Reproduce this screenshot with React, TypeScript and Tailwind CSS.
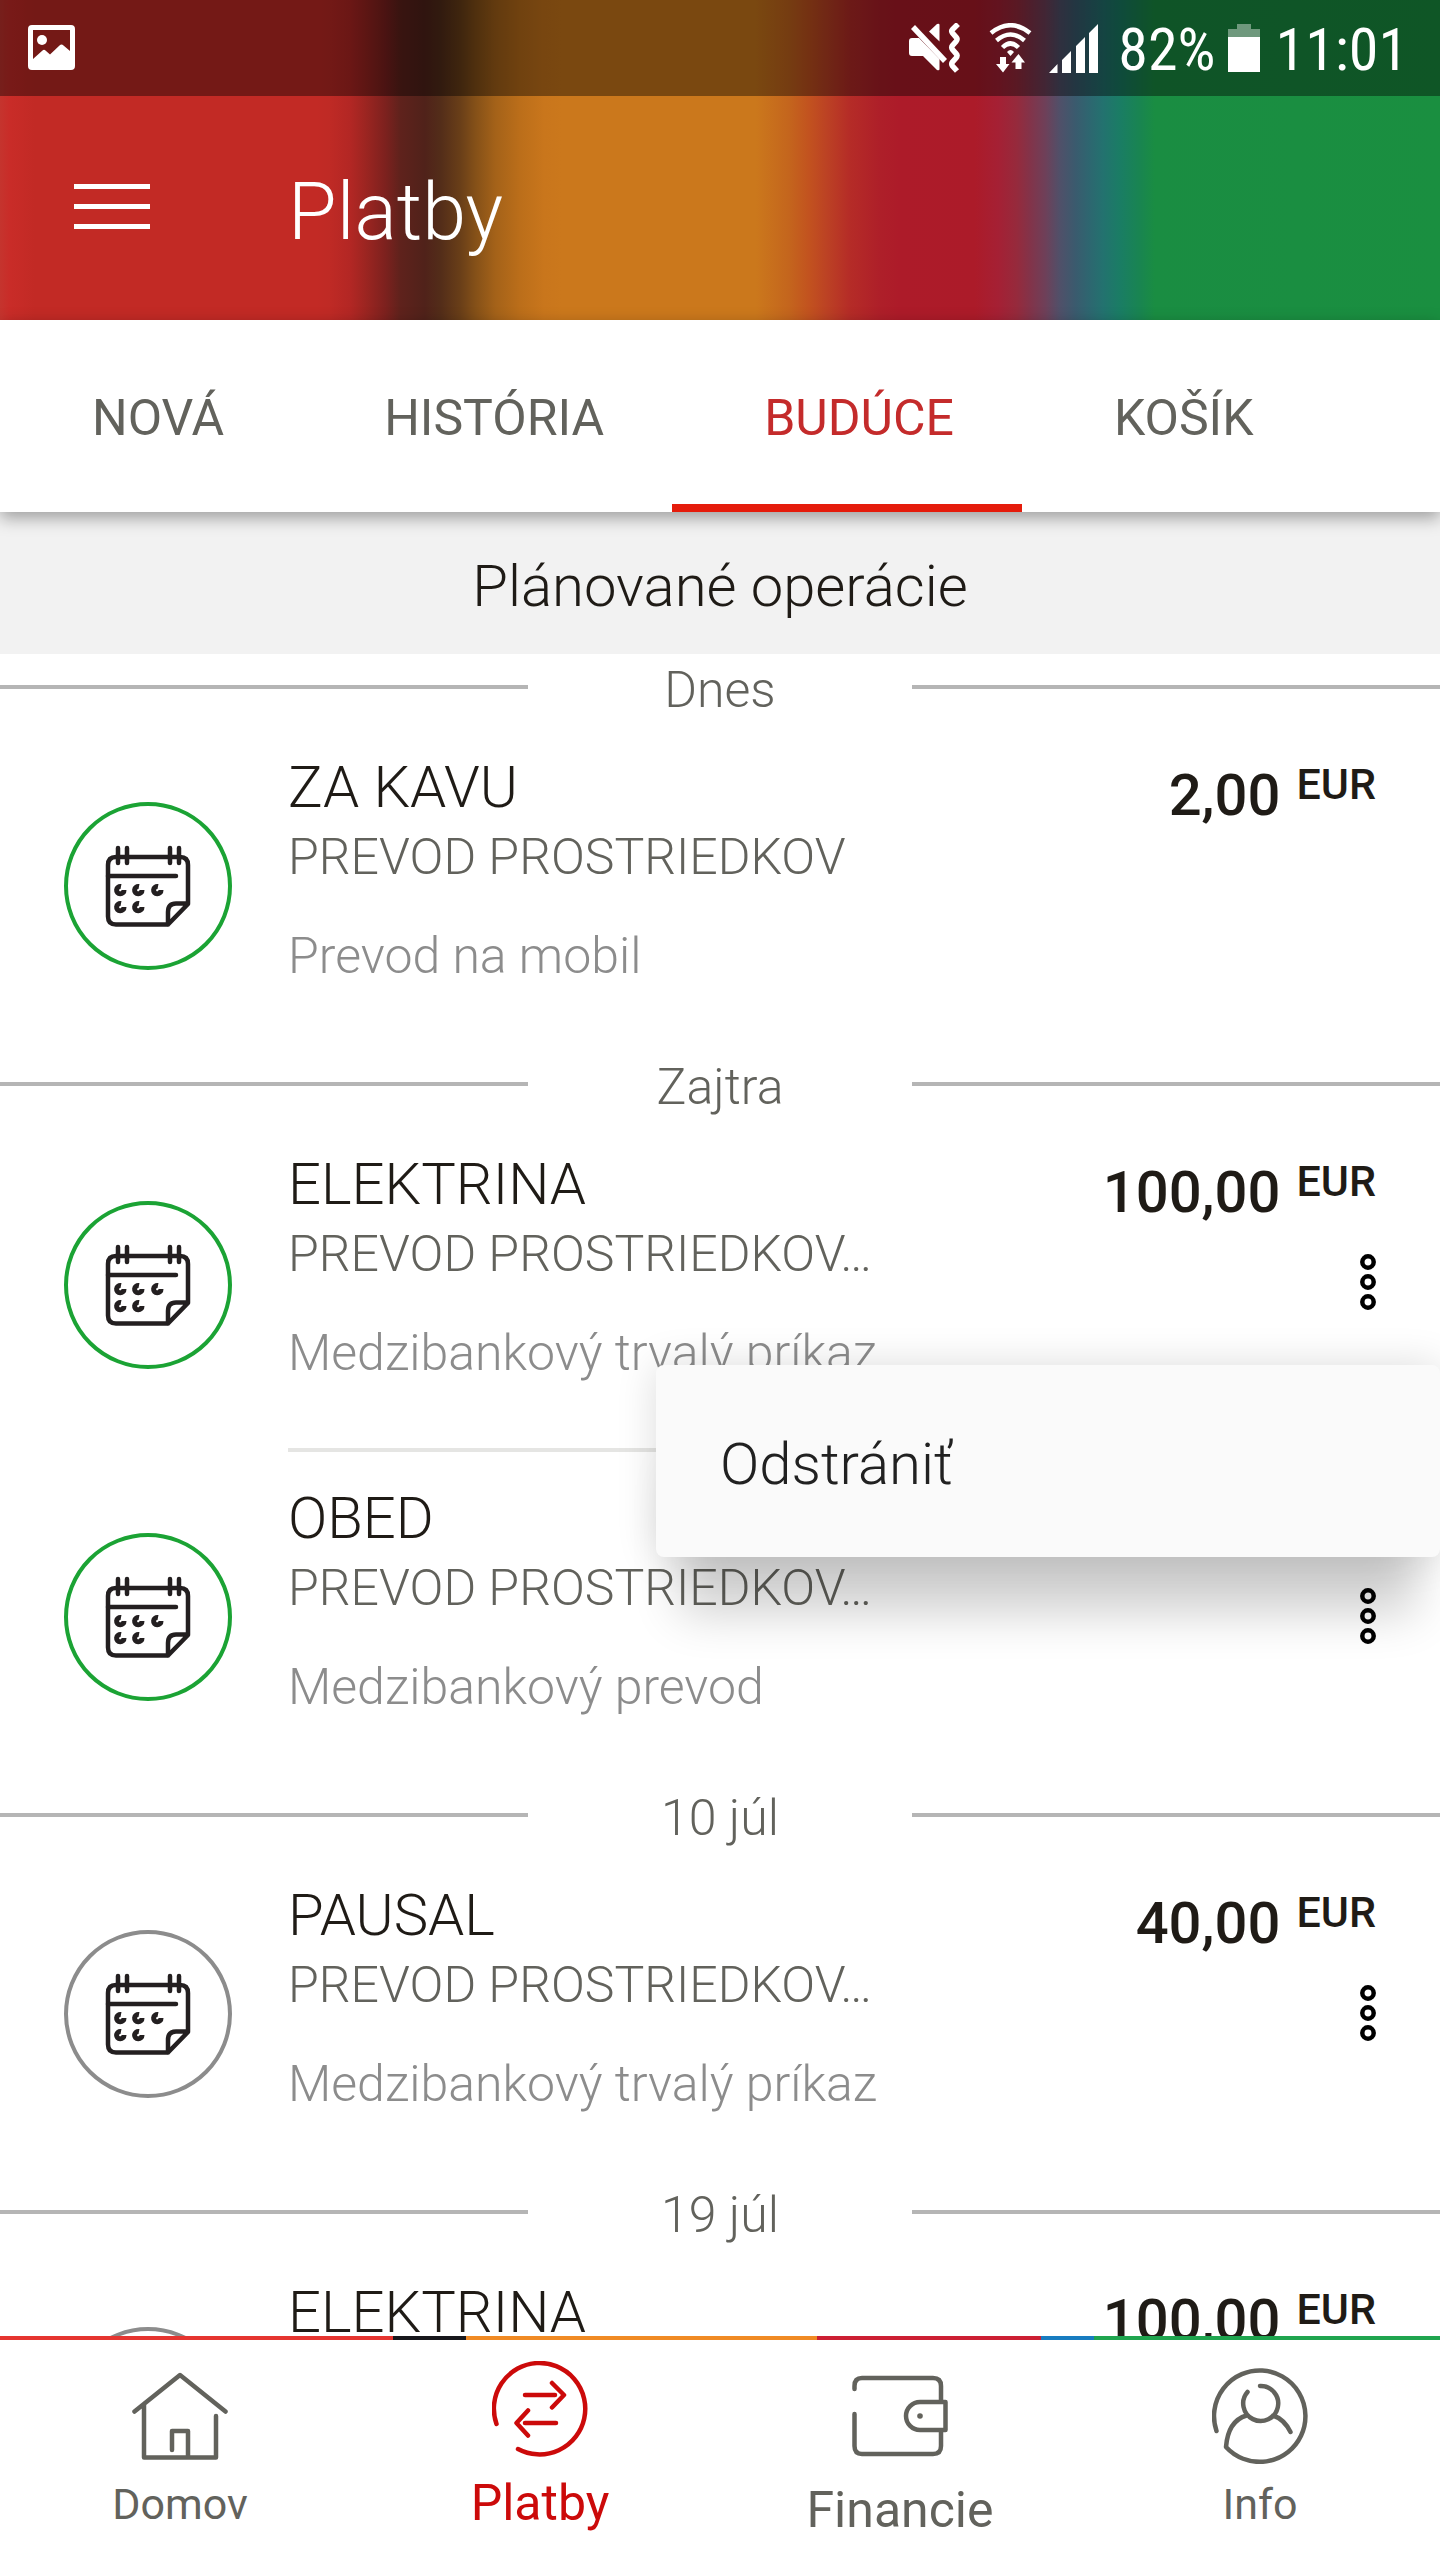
import type { ReactNode } from "react";

type Payment = {
  title: string;
  subtitle?: string;
  kind?: string;
  amount: string;
  due: boolean;
  actions?: boolean;
  menuOpen?: boolean;
};

type Section = { label: string; payments: Payment[] };

const tabs = ["NOVÁ", "HISTÓRIA", "BUDÚCE", "KOŠÍK"];

const sections: Section[] = [
  {
    label: "Dnes",
    payments: [
      { title: "ZA KAVU", subtitle: "PREVOD PROSTRIEDKOV", kind: "Prevod na mobil", amount: "2,00", due: true },
    ],
  },
  {
    label: "Zajtra",
    payments: [
      {
        title: "ELEKTRINA",
        subtitle: "PREVOD PROSTRIEDKOV…",
        kind: "Medzibankový trvalý príkaz",
        amount: "100,00",
        due: true,
        actions: true,
        menuOpen: true,
      },
      {
        title: "OBED",
        subtitle: "PREVOD PROSTRIEDKOV…",
        kind: "Medzibankový prevod",
        amount: "4,00",
        due: true,
        actions: true,
      },
    ],
  },
  {
    label: "10 júl",
    payments: [
      {
        title: "PAUSAL",
        subtitle: "PREVOD PROSTRIEDKOV…",
        kind: "Medzibankový trvalý príkaz",
        amount: "40,00",
        due: false,
        actions: true,
      },
    ],
  },
  {
    label: "19 júl",
    payments: [{ title: "ELEKTRINA", amount: "100,00", due: false, actions: true }],
  },
];

function PictureIcon() {
  return (
    <svg width="48" height="46" viewBox="0 0 48 46" fill="white" aria-hidden="true">
      <path
        fillRule="evenodd"
        d="M4 0H43A4 4 0 0 1 47 4V41A4 4 0 0 1 43 45H4A4 4 0 0 1 0 41V4A4 4 0 0 1 4 0ZM5 5V34L14.500 25.500Q16 24 17.500 25.500L22 29.500L31.500 20.500Q33.500 18.500 35.500 20.500L42 26V5Z"
      />
      <circle cx="14" cy="15" r="5" />
    </svg>
  );
}

function MuteVibrateIcon() {
  return (
    <svg width="52" height="50" viewBox="0 0 52 50" fill="white" aria-hidden="true">
      <path d="M3 15H10L30.500 36V46Q30.500 48 28 47L14 33H3Q0 33 0 30V18Q0 15 3 15Z" />
      <path d="M20 8.500L28 1Q30.500 0 30.500 2V18.500Z" />
      <path d="M4 4L36 38" stroke="white" strokeWidth="5.500" />
      <path
        d="M49 1L43.500 6.500Q42 8 43.500 10L47 14Q49 16 47 18.500L43.500 22.500Q42 24.500 43.500 26.500L47 30.500Q49 32.500 47 35L43.500 39Q42 41 43.500 43L48 48"
        fill="none"
        stroke="white"
        strokeWidth="5.500"
      />
    </svg>
  );
}

function WifiIcon() {
  return (
    <svg width="44" height="50" viewBox="0 0 44 50" fill="none" stroke="white" strokeWidth="4.500" aria-hidden="true">
      <path d="M2 10Q21.500 -5.500 41 10" />
      <path d="M7.500 17.500Q21.500 5.500 35.500 17.500" />
      <path d="M13.500 24.500Q21.500 16.500 29.500 24.500" />
      <path d="M18 29Q21.500 25 25 29L21.500 33Z" fill="white" stroke="none" />
      <path d="M11 34H17V41H20.500L14 49.500L7 41H11Z" fill="white" stroke="none" />
      <path d="M26.500 46H32.500V39.500H36L29.500 31L22.500 39.500H26.500Z" fill="white" stroke="none" />
    </svg>
  );
}

function SignalIcon() {
  return (
    <svg width="49" height="49" viewBox="0 0 49 49" fill="white" aria-hidden="true">
      <path d="M0 49L8.500 40V49ZM13 49V36L22 27V49ZM27 49V22L36 13V49ZM40 49V9L49 0V49Z" />
    </svg>
  );
}

function BatteryIcon() {
  return (
    <svg width="32" height="48" viewBox="0 0 32 48" aria-hidden="true">
      <path d="M9 0H23V5H32V13H0V5H9Z" fill="white" fillOpacity="0.4" />
      <path d="M0 13H32V48H0Z" fill="white" />
    </svg>
  );
}

function CalendarBadge({ due }: { due: boolean }) {
  const days = [
    [56, 88],
    [74, 88],
    [93, 88],
    [56, 105],
    [74, 105],
  ];
  return (
    <svg className="size-42 shrink-0" viewBox="0 0 168 168" fill="none" strokeWidth="4" strokeLinecap="round" aria-hidden="true">
      <circle cx="84" cy="84" r="82" stroke={due ? "#1ba334" : "#8c8c8c"} />
      <g stroke="#231f20" strokeWidth="4.500">
        <path d="M104 122.500H52Q44 122.500 44 114.500V63Q44 55 52 55H116Q124 55 124 63V102L104 122.500V110Q104 101.500 112 101.500H124" strokeLinejoin="round" />
        <path d="M44 74H112M54 46V61M63 46V61M106 46V61M115 46V61" />
        {days.map(([x, y]) => (
          <path
            key={`${x}-${y}`}
            d={`M${x + 1} ${y - 3.5}A3.700 3.700 0 1 0 ${x + 4} ${y}`}
            strokeLinecap="butt"
            strokeWidth="5"
          />
        ))}
      </g>
    </svg>
  );
}

function NavSvg({ children }: { children: ReactNode }) {
  return (
    <svg
      className="size-24"
      viewBox="0 0 96 96"
      fill="none"
      stroke="currentColor"
      strokeWidth="4.500"
      strokeLinecap="round"
      strokeLinejoin="round"
      aria-hidden="true"
    >
      {children}
    </svg>
  );
}

const navItems = [
  {
    label: "Domov",
    item: "pt-7 text-[#62625c]",
    text: "mt-2 text-[43px]",
    icon: (
      <NavSvg>
        <path d="M2.500 43.500L48 7L93.500 43.500M12 37V89.500H84V48M40 82V63H56V89" />
      </NavSvg>
    ),
  },
  {
    label: "Platby",
    current: true,
    item: "pt-[21px] text-[#cc0a0a]",
    text: "mt-[14px] text-[50px]",
    icon: (
      <NavSvg>
        <path d="M4.500 63A45.700 45.700 0 1 1 26 88M33 34H63M60 22L72 34L60 46.500M64 62H33M36 49.500L24.500 62L36 74.500" />
      </NavSvg>
    ),
  },
  {
    label: "Financie",
    item: "pt-7 text-[#62625c]",
    text: "mt-[14px] text-[50px]",
    icon: (
      <NavSvg>
        <path d="M2.500 21V18Q2.500 10 10 10H81Q89 10 89 18V33M89 63V78Q89 86 81 86H10Q2.500 86 2.500 78V46M93.500 34H68A14 14 0 0 0 68 62H93.500Z" />
        <circle cx="68" cy="48" r="2.800" fill="currentColor" stroke="none" />
      </NavSvg>
    ),
  },
  {
    label: "Info",
    item: "pt-7 text-[#62625c]",
    text: "mt-2 text-[43px]",
    icon: (
      <NavSvg>
        <path d="M4.500 63A45.700 45.700 0 1 1 14 79Q16 53 34.500 47.500M35.500 24A17.500 17.500 0 1 0 48 18M61 47.500Q72 51 78.500 64" />
      </NavSvg>
    ),
  },
];

function PaymentRow({ payment, divided }: { payment: Payment; divided: boolean }) {
  return (
    <li className="relative flex items-center pl-16">
      <CalendarBadge due={payment.due} />
      <div
        className={
          divided
            ? "ml-14 flex flex-1 justify-between border-b-4 border-[#e5e5e3]"
            : "ml-14 flex flex-1 justify-between"
        }
      >
        <div className="min-h-[330px] pt-8 font-light">
          <h3 className="text-[58px] leading-[68px] text-[#1f1b16]">{payment.title}</h3>
          {payment.subtitle && <p className="text-[50px] leading-[72px] text-[#62625c]">{payment.subtitle}</p>}
          {payment.kind && <p className="mt-7 text-[50px] leading-[70px] text-[#8c8c8c]">{payment.kind}</p>}
        </div>
        <div className="flex flex-col items-end pt-10 pr-16 font-medium text-[#1f1b16]">
          <p className="flex items-start gap-4">
            <span className="text-[58px] leading-[68px]">{payment.amount}</span>
            <span className="text-[43px] leading-[46px]">EUR</span>
          </p>
          {payment.actions && (
            <button type="button" aria-label="Možnosti" aria-expanded={!!payment.menuOpen} className="mt-[27px]">
              <svg width="16" height="58" viewBox="0 0 16 58" fill="none" stroke="black" strokeWidth="4.500" aria-hidden="true">
                <circle cx="8" cy="9" r="5.700" />
                <circle cx="8" cy="29" r="5.700" />
                <circle cx="8" cy="49" r="5.700" />
              </svg>
            </button>
          )}
        </div>
      </div>
      {payment.menuOpen && (
        <div
          role="menu"
          className="absolute top-[247px] right-0 z-10 w-[784px] rounded-lg bg-[#fafafa] shadow-[0_80px_48px_-24px_rgba(0,0,0,0.19),0_0px_40px_rgba(0,0,0,0.14)]"
        >
          <button
            type="button"
            role="menuitem"
            className="w-full px-16 pt-16 pb-[58px] text-left text-[58px] leading-[70px] font-light text-[#212121]"
          >
            Odstrániť
          </button>
        </div>
      )}
    </li>
  );
}

export default function App() {
  return (
    <div className="flex h-screen flex-col overflow-hidden bg-white font-['Roboto',sans-serif] whitespace-nowrap">
      <header className="bg-[linear-gradient(90deg,#c5342e_0%,#c92c28_0.7%,#c22a25_2.4%,#c22a25_22%,#bf2a25_22.9%,#b32724_24.3%,#9c2521_25.4%,#7c211e_26.8%,#5f221c_27.8%,#50221a_29.5%,#532d19_30.6%,#6a3f18_32%,#845018_33%,#a46219_34.4%,#bb6e1a_36.1%,#c9761c_37.8%,#cb781c_39%,#cb781c_52.500%,#c4651d_54.8%,#c2521f_56.2%,#bc4224_57.4%,#b52c27_59%,#ae1f29_61.1%,#ad1b29_62.500%,#ac1b29_67.7%,#a52034_69.3%,#962a3c_70.6%,#833349_71.500%,#6e4059_72.6%,#505069_73.6%,#3a5b6e_74.7%,#2d6770_75.7%,#23726f_76.6%,#1a7d64_77.8%,#198550_79.2%,#1a8d42_80.2%,#1a8f40_100%)] text-white">
        <div className="flex h-24 items-center bg-black/40 pr-8 pl-7">
          <PictureIcon />
          <div className="ml-auto flex items-center">
            <MuteVibrateIcon />
            <span className="ml-7">
              <WifiIcon />
            </span>
            <span className="ml-4">
              <SignalIcon />
            </span>
            <span className="ml-5 pt-1 font-['Roboto_Condensed','Roboto',sans-serif] text-[60px] leading-[92px]">82%</span>
            <span className="ml-3">
              <BatteryIcon />
            </span>
            <span className="ml-4 pt-1 font-['Roboto_Condensed','Roboto',sans-serif] text-[60px] leading-[92px]">11:01</span>
          </div>
        </div>
        <div className="flex h-56 items-center">
          <button type="button" aria-label="Menu" className="ml-[74px] flex w-[76px] flex-col gap-[15px] pb-1">
            <span className="h-[5px] bg-white" />
            <span className="h-[5px] bg-white" />
            <span className="h-[5px] bg-white" />
          </button>
          <h1 className="ml-[138px] pt-2 text-[79px] leading-[96px] font-light">Platby</h1>
        </div>
      </header>

      <div role="tablist" className="relative z-10 flex h-48 shrink-0 bg-white shadow-[0_6px_16px_rgba(0,0,0,0.35)]">
        {tabs.map((tab) => {
          const active = tab === "BUDÚCE";
          return (
            <button
              key={tab}
              type="button"
              role="tab"
              aria-selected={active}
              className={
                active
                  ? "border-b-8 border-[#e51c0c] pt-3 pr-[68px] pl-[92px] text-[50px] text-[#c42b2b]"
                  : "pt-1 pr-[68px] pl-[92px] text-[50px] text-[#62625c]"
              }
            >
              {tab}
            </button>
          );
        })}
      </div>

      <main className="min-h-0 flex-1 overflow-hidden">
        <h2 className="bg-[#f2f2f2] pt-[39px] pb-[33px] text-center text-[58px] leading-[70px] font-light text-[#1f1b16]">
          Plánované operácie
        </h2>
        {sections.map((section) => (
          <section key={section.label}>
            <div className="flex h-[67px]">
              <span className="mt-[31px] h-1 flex-1 bg-[#b5b5b5]" />
              <h2 className="w-[384px] pt-1 text-center text-[50px] leading-[64px] font-light text-[#62625c]">
                {section.label}
              </h2>
              <span className="mt-[31px] h-1 flex-1 bg-[#b5b5b5]" />
            </div>
            <ul>
              {section.payments.map((payment, i) => (
                <PaymentRow key={payment.title} payment={payment} divided={i < section.payments.length - 1} />
              ))}
            </ul>
          </section>
        ))}
      </main>

      <nav className="relative z-20 shrink-0 bg-white">
        <div className="flex h-1">
          <span className="grow-393 bg-[#e53530]" />
          <span className="grow-73 bg-[#17171c]" />
          <span className="grow-351 bg-[#f08a24]" />
          <span className="grow-224 bg-[#cc1f33]" />
          <span className="grow-53 bg-[#187cc0]" />
          <span className="grow-346 bg-[#1fa54f]" />
        </div>
        <ul className="grid h-[220px] grid-cols-4">
          {navItems.map(({ label, item, text, icon, current }) => (
            <li key={label}>
              <a href="#" aria-current={current ? "page" : undefined} className={`flex flex-col items-center ${item}`}>
                {icon}
                <span className={`leading-[64px] ${text}`}>{label}</span>
              </a>
            </li>
          ))}
        </ul>
      </nav>
    </div>
  );
}
